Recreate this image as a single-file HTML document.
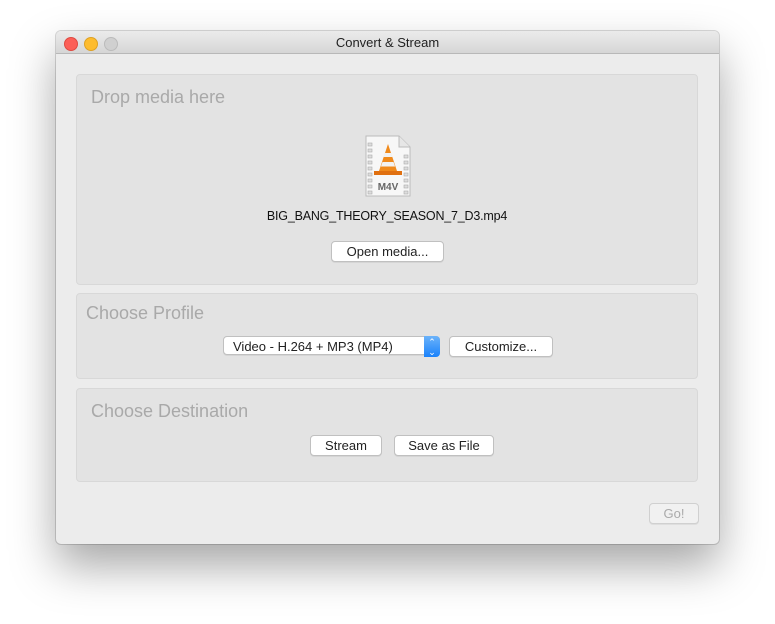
<!DOCTYPE html>
<html><head><style>
body{margin:0;width:775px;height:624px;background:#fff;position:relative;font-family:"Liberation Sans",sans-serif;overflow:hidden}
.win{position:absolute;left:56px;top:31px;width:663px;height:513px;background:#ececec;border-radius:5px;box-shadow:0 22px 45px rgba(0,0,0,.35),0 0 0 1px rgba(0,0,0,.15);overflow:hidden}
.tb{height:22px;background:linear-gradient(#ebebeb,#d6d6d6);border-bottom:1px solid #b8b8b8;text-align:center;font-size:13px;line-height:23px;color:#222}
.dot{position:absolute;top:6px;width:12px;height:12px;border-radius:50%}
.box{position:absolute;left:20px;width:620px;background:#e3e3e3;border:1px solid #d8d8d8;border-radius:4px}
.h{position:absolute;font-size:18px;color:#a9a9a9}
.btn{position:absolute;height:19px;background:#fff;border:1px solid #c0c0c0;border-radius:4px;box-shadow:0 1px 0 rgba(0,0,0,.06);font-size:13px;line-height:19px;text-align:center;color:#222}
</style></head><body>
<div class="win">
<div class="tb">Convert &amp; Stream</div>
<div class="dot" style="left:8px;background:#fc5f57;border:.5px solid #de4a41"></div>
<div class="dot" style="left:28px;background:#fdbc2e;border:.5px solid #dea123"></div>
<div class="dot" style="left:48px;background:#d0d0d0;border:.5px solid #bbb"></div>
<div class="box" style="top:43px;height:209px">
 <div class="h" style="left:14px;top:12px">Drop media here</div>
 <svg style="position:absolute;left:287px;top:60px" width="48" height="62" viewBox="0 0 48 62">
  <path d="M2 1h33l11 11v49H2z" fill="#f7f7f7" stroke="#bbb"/>
  <path d="M35 1v11h11" fill="#e6e6e6" stroke="#bbb"/>
  <g fill="#ddd" stroke="#aaa" stroke-width=".6"><rect x="4" y="8" width="4" height="3"/><rect x="4" y="14" width="4" height="3"/><rect x="4" y="20" width="4" height="3"/><rect x="4" y="26" width="4" height="3"/><rect x="4" y="32" width="4" height="3"/><rect x="4" y="38" width="4" height="3"/><rect x="4" y="44" width="4" height="3"/><rect x="4" y="50" width="4" height="3"/><rect x="4" y="56" width="4" height="3"/>
  <rect x="40" y="20" width="4" height="3"/><rect x="40" y="26" width="4" height="3"/><rect x="40" y="32" width="4" height="3"/><rect x="40" y="38" width="4" height="3"/><rect x="40" y="44" width="4" height="3"/><rect x="40" y="50" width="4" height="3"/><rect x="40" y="56" width="4" height="3"/></g>
  <path d="M24 9l9 27H15z" fill="#f08a1c"/><path d="M18.5 27h11l1.6 4.5H16.9zM20.8 18h6.4l1.3 4H19.5z" fill="#f2f2f2"/>
  <path d="M10 36h28v4H10z" fill="#e07010"/>
  <text x="24" y="55" font-size="10" font-weight="bold" text-anchor="middle" fill="#666" font-family="Liberation Sans">M4V</text>
 </svg>
 <div style="position:absolute;left:0;width:620px;top:134px;text-align:center;font-size:12.5px;letter-spacing:-0.2px;color:#111">BIG_BANG_THEORY_SEASON_7_D3.mp4</div>
 <div class="btn" style="left:254px;top:166px;width:111px">Open media...</div>
</div>
<div class="box" style="top:262px;height:84px">
 <div class="h" style="left:9px;top:9px">Choose Profile</div>
 <div class="btn" style="left:146px;top:42px;width:217px;text-align:left;padding-left:9px;box-sizing:border-box">Video - H.264 + MP3 (MP4)
  <div style="position:absolute;right:-1px;top:-1px;width:16px;height:21px;background:linear-gradient(#6cb3fa,#1a82fb);border-radius:0 4px 4px 0;color:#fff;font-size:9px;line-height:10px;text-align:center;padding-top:1px;box-sizing:border-box">&#8963;<br>&#8964;</div></div>
 <div class="btn" style="left:372px;top:42px;width:102px">Customize...</div>
</div>
<div class="box" style="top:357px;height:92px">
 <div class="h" style="left:14px;top:12px">Choose Destination</div>
 <div class="btn" style="left:233px;top:46px;width:70px">Stream</div>
 <div class="btn" style="left:317px;top:46px;width:98px">Save as File</div>
</div>
<div class="btn" style="left:593px;top:472px;width:48px;background:#f1f1f1;color:#aaa;border-color:#d0d0d0">Go!</div>
</div>
</body></html>
